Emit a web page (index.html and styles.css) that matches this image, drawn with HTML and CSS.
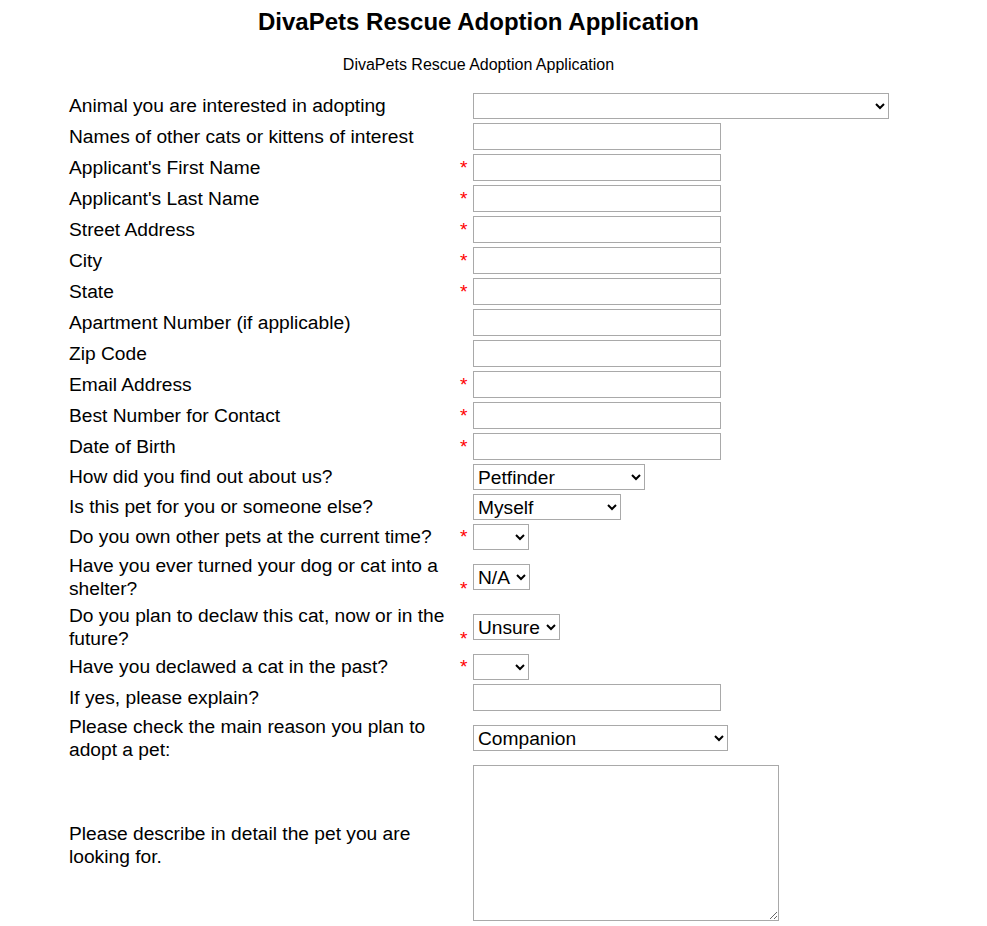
FILE: index.html
```html
<!DOCTYPE html>
<html lang="en">
<head>
<meta charset="utf-8">
<title>DivaPets Rescue Adoption Application</title>
<link rel="stylesheet" href="styles.css">
</head>
<body>
<div class="page">
  <h2 class="title">DivaPets Rescue Adoption Application</h2>
  <p class="subtitle">DivaPets Rescue Adoption Application</p>
  <form class="form">
    <div class="row row-sel">
      <div class="lab"><span class="lab-text">Animal you are interested in adopting</span><span class="req"></span></div>
      <select class="sel sel-animal"><option></option></select>
    </div>
    <div class="row">
      <div class="lab"><span class="lab-text">Names of other cats or kittens of interest</span><span class="req"></span></div>
      <input class="txt" type="text">
    </div>
    <div class="row">
      <div class="lab"><span class="lab-text">Applicant's First Name</span><span class="req">*</span></div>
      <input class="txt" type="text">
    </div>
    <div class="row">
      <div class="lab"><span class="lab-text">Applicant's Last Name</span><span class="req">*</span></div>
      <input class="txt" type="text">
    </div>
    <div class="row">
      <div class="lab"><span class="lab-text">Street Address</span><span class="req">*</span></div>
      <input class="txt" type="text">
    </div>
    <div class="row">
      <div class="lab"><span class="lab-text">City</span><span class="req">*</span></div>
      <input class="txt" type="text">
    </div>
    <div class="row">
      <div class="lab"><span class="lab-text">State</span><span class="req">*</span></div>
      <input class="txt" type="text">
    </div>
    <div class="row">
      <div class="lab"><span class="lab-text">Apartment Number (if applicable)</span><span class="req"></span></div>
      <input class="txt" type="text">
    </div>
    <div class="row">
      <div class="lab"><span class="lab-text">Zip Code</span><span class="req"></span></div>
      <input class="txt" type="text">
    </div>
    <div class="row">
      <div class="lab"><span class="lab-text">Email Address</span><span class="req">*</span></div>
      <input class="txt" type="text">
    </div>
    <div class="row">
      <div class="lab"><span class="lab-text">Best Number for Contact</span><span class="req">*</span></div>
      <input class="txt" type="text">
    </div>
    <div class="row">
      <div class="lab"><span class="lab-text">Date of Birth</span><span class="req">*</span></div>
      <input class="txt" type="text">
    </div>
    <div class="row row-sel">
      <div class="lab"><span class="lab-text">How did you find out about us?</span><span class="req"></span></div>
      <select class="sel sel-find"><option>Petfinder</option></select>
    </div>
    <div class="row row-sel">
      <div class="lab"><span class="lab-text">Is this pet for you or someone else?</span><span class="req"></span></div>
      <select class="sel sel-who"><option>Myself</option></select>
    </div>
    <div class="row row-sel">
      <div class="lab"><span class="lab-text">Do you own other pets at the current time?</span><span class="req">*</span></div>
      <select class="sel sel-empty"><option></option></select>
    </div>
    <div class="row">
      <div class="lab"><span class="lab-text">Have you ever turned your dog or cat into a shelter?</span><span class="req">*</span></div>
      <select class="sel sel-na"><option>N/A</option></select>
    </div>
    <div class="row">
      <div class="lab"><span class="lab-text">Do you plan to declaw this cat, now or in the future?</span><span class="req">*</span></div>
      <select class="sel sel-unsure"><option>Unsure</option></select>
    </div>
    <div class="row row-sel">
      <div class="lab"><span class="lab-text">Have you declawed a cat in the past?</span><span class="req">*</span></div>
      <select class="sel sel-empty"><option></option></select>
    </div>
    <div class="row">
      <div class="lab"><span class="lab-text">If yes, please explain?</span><span class="req"></span></div>
      <input class="txt" type="text">
    </div>
    <div class="row">
      <div class="lab"><span class="lab-text">Please check the main reason you plan to adopt a pet:</span><span class="req"></span></div>
      <select class="sel sel-reason"><option>Companion</option></select>
    </div>
    <div class="row row-area">
      <div class="lab"><span class="lab-text">Please describe in detail the pet you are looking for.</span><span class="req"></span></div>
      <textarea class="area"></textarea>
    </div>
  </form>
</div>
</body>
</html>
```

FILE: styles.css
```css
html, body {
  background: #ffffff;
}
body {
  margin: 8px;
  font-family: "Liberation Sans", Arial, sans-serif;
  color: #000;
}
.page {
  width: 941px;
}
.title {
  margin: 0 0 20px;
  font-size: 24px;
  font-weight: 700;
  text-align: center;
  line-height: normal;
}
.subtitle {
  margin: 0 0 19px;
  font-size: 16px;
  text-align: center;
  line-height: normal;
}
.form {
  margin: 0 0 0 61px;
  display: flex;
  flex-direction: column;
  gap: 4px;
}
.row {
  display: grid;
  grid-template-columns: 400px auto;
  column-gap: 4px;
  align-items: center;
  justify-items: start;
}
.lab {
  display: flex;
  align-items: flex-end;
  gap: 4px;
  font-size: 19.2px;
  line-height: 23px;
}
.row-sel .lab {
  margin-bottom: 1px;
}
.row-area .lab {
  margin-top: 4px;
}
.lab-text {
  width: 387px;
}
.req {
  width: 9px;
  color: #ff0000;
}
.txt {
  box-sizing: border-box;
  width: 248px;
  height: 27px;
  margin: 0;
  padding: 1px 2px;
  border: 1px solid #a9a9a9;
  border-radius: 0;
  background: #fff;
  font: 19.2px "Liberation Sans", Arial, sans-serif;
}
.sel {
  box-sizing: border-box;
  height: 26px;
  margin: 0;
  padding: 0;
  border: 1px solid #a9a9a9;
  border-radius: 0;
  background-color: #fff;
  color: #000;
  font: 19.2px "Liberation Sans", Arial, sans-serif;
}
.sel-animal { width: 416px; }
.sel-find { width: 172px; }
.sel-who { width: 148px; }
.sel-empty { width: 56px; }
.sel-na { width: 57px; }
.sel-unsure { width: 87px; }
.sel-reason { width: 255px; }
.area {
  box-sizing: border-box;
  width: 306px;
  height: 156px;
  margin: 0;
  border: 1px solid #a9a9a9;
  border-radius: 0;
  background: #fff;
  font: 19.2px "Liberation Sans", Arial, sans-serif;
}
```
